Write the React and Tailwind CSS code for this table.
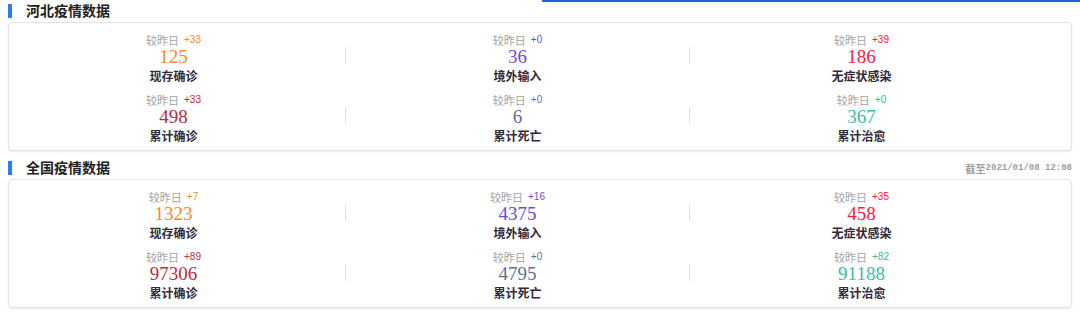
import React from "react";

const CJK = "font-['Noto_Sans_CJK_SC','Noto_Sans',sans-serif]";

const sections = [
  {
    title: "河北疫情数据",
    time: null,
    rows: [
      [
        { d: "+33", n: "125", l: "现存确诊", c: "text-[#f78a24]" },
        { d: "+0", n: "36", l: "境外输入", c: "text-[#6a4fd4]" },
        { d: "+39", n: "186", l: "无症状感染", c: "text-[#f7213a]" },
      ],
      [
        { d: "+33", n: "498", l: "累计确诊", c: "text-[#b92c3d]" },
        { d: "+0", n: "6", l: "累计死亡", c: "text-[#5f6f96]" },
        { d: "+0", n: "367", l: "累计治愈", c: "text-[#38bda3]" },
      ],
    ],
  },
  {
    title: "全国疫情数据",
    time: "2021/01/08 12:08",
    rows: [
      [
        { d: "+7", n: "1323", l: "现存确诊", c: "text-[#f78a24]" },
        { d: "+16", n: "4375", l: "境外输入", c: "text-[#6a4fd4]" },
        { d: "+35", n: "458", l: "无症状感染", c: "text-[#f7213a]" },
      ],
      [
        { d: "+89", n: "97306", l: "累计确诊", c: "text-[#b92c3d]" },
        { d: "+0", n: "4795", l: "累计死亡", c: "text-[#5f6f96]" },
        { d: "+82", n: "91188", l: "累计治愈", c: "text-[#38bda3]" },
      ],
    ],
  },
];

function Cell({ item, divider }) {
  return (
    <div className="flex w-[344px]">
      <div className="flex-1 flex flex-col items-center">
        <div className="flex items-center h-[14px] leading-[14px]">
          <span className={`${CJK} text-[11px] text-[#a3a3a3]`}>较昨日</span>
          <span className={`ml-[5px] text-[10px] font-['Liberation_Sans',sans-serif] ${item.c}`}>
            {item.d}
          </span>
        </div>
        <div className={`h-[20px] leading-[20px] text-[19px] font-['Liberation_Serif',serif] ${item.c}`}>
          {item.n}
        </div>
        <div className={`${CJK} h-[17px] leading-[17px] text-[12px] font-bold text-[#2f2b3a]`}>
          {item.l}
        </div>
      </div>
      <div className="w-px pt-[14px]">
        {divider && <div className="w-px h-[17px] bg-[#e2e2e6]" />}
      </div>
    </div>
  );
}

function Section({ s }) {
  return (
    <div>
      <div className="flex items-center h-[21px] pl-[8px] pr-[8px]">
        <div className="w-[4px] h-[14px] bg-[#2b7bf4]" />
        <div className={`${CJK} ml-[14px] text-[14px] font-bold text-[#222222] leading-[21px]`}>
          {s.title}
        </div>
        {s.time && (
          <div className="ml-auto mt-[2px] flex items-center text-[#a0a0a0] font-bold">
            <span className={`${CJK} text-[10px]`}>截至</span>
            <span className="font-['Liberation_Mono',monospace] text-[9px]">{s.time}</span>
          </div>
        )}
      </div>
      <div className="mx-[8px] mt-[1px] h-[129px] border border-[#e3e3ea] rounded-[4px] shadow-[0_1px_2px_rgba(0,0,0,0.08)] bg-white pt-[10px]">
        <div className="-ml-[7px] flex flex-col gap-[9px]">
          {s.rows.map((row, ri) => (
            <div key={ri} className="flex">
              {row.map((item, ci) => (
                <Cell key={ci} item={item} divider={ci < 2} />
              ))}
            </div>
          ))}
        </div>
      </div>
    </div>
  );
}

export default function App() {
  return (
    <div className="relative w-[1080px] h-[315px] bg-white overflow-hidden">
      <div className="absolute top-0 left-[542px] right-0 h-[2px] bg-[#1b5fd3]" />
      <Section s={sections[0]} />
      <div className="h-[6px]" />
      <Section s={sections[1]} />
    </div>
  );
}
